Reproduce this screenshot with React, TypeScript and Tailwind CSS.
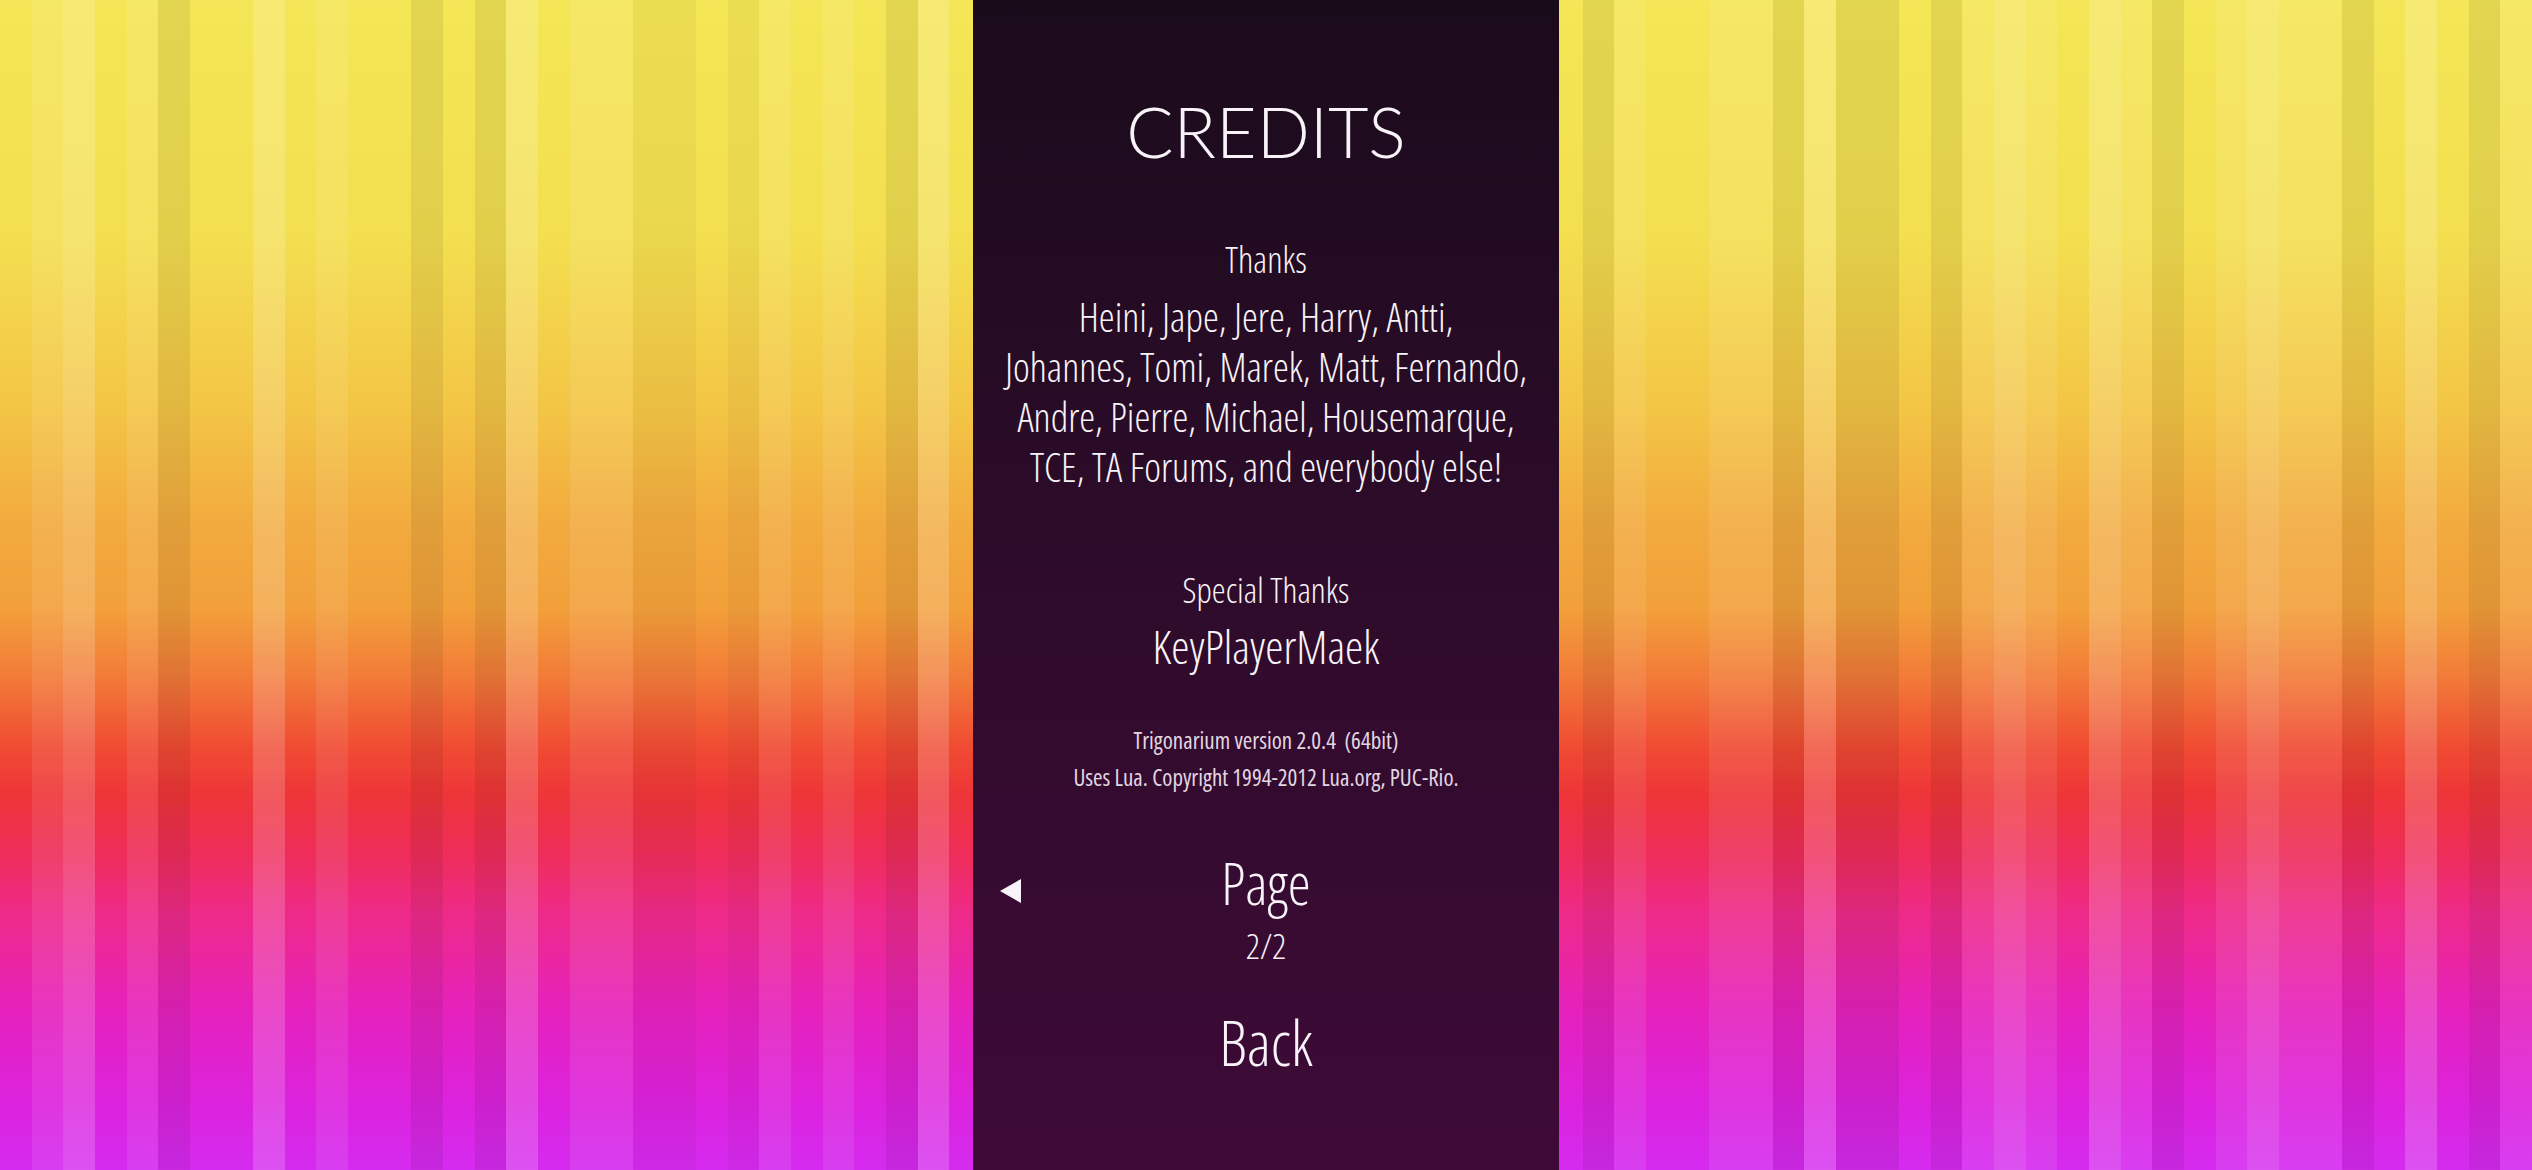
const TONES =
  "mlLmldmmLmlmmdmdLmllxxmxlmlmdLm" +
  "mmmmmmmmmmmmmmmmmm" +
  "mdlmmlldLddmdlLlmLldmlLlldmLmdl";

const toneClass: Record<string, string> = {
  L: "bg-white/[0.18]",
  l: "bg-white/[0.09]",
  m: "",
  x: "bg-black/[0.035]",
  d: "bg-black/[0.07]",
};

function Stripes({ from, to, end }: { from: number; to: number; end?: boolean }) {
  const tones = TONES.slice(from, to).split("");
  return (
    <div
      className={
        "flex flex-1 overflow-hidden bg-[linear-gradient(to_bottom,#f4e656_0%,#f3df50_20%,#f3c545_35%,#f2aa3e_45%,#f2a03a_52%,#f27a38_58%,#f04a33_64%,#ee3538_68%,#ee2d5a_73%,#ee2a88_78%,#e622bb_86%,#dc22dc_94%,#d52bf0_100%)] " +
        (end ? "justify-end" : "justify-start")
      }
    >
      {tones.map((t, i) => (
        <div key={i} className={"h-full w-[31.65px] shrink-0 " + toneClass[t]} />
      ))}
    </div>
  );
}

const names = [
  "Heini, Jape, Jere, Harry, Antti,",
  "Johannes, Tomi, Marek, Matt, Fernando,",
  "Andre, Pierre, Michael, Housemarque,",
  "TCE, TA Forums, and everybody else!",
];

export default function App() {
  return (
    <div className="flex h-[1170px] w-[2532px] overflow-hidden">
      <Stripes from={0} to={31} />

      <main className="flex w-[586px] shrink-0 flex-col items-center bg-gradient-to-b from-[#1a0b1b] via-[#2e0b2b] to-[#3e0a37] font-['Open_Sans',sans-serif] font-light font-stretch-[75%] text-[#f8f3f8]">
        <h1 className="mt-[96px] font-['Lato',sans-serif] text-[70px] font-light font-stretch-normal leading-none">
          CREDITS
        </h1>

        <h2 className="mt-[76px] text-[36px] leading-none">Thanks</h2>
        <div className="mt-[14px] flex flex-col items-center text-[40px] leading-[50px]">
          {names.map((n) => (
            <p key={n}>{n}</p>
          ))}
        </div>

        <h2 className="mt-[80px] text-[35px] leading-none">Special Thanks</h2>
        <p className="mt-[16px] text-[46px] leading-none">KeyPlayerMaek</p>

        <div className="mt-[53px] flex flex-col items-center text-[23px] font-normal leading-[37px] text-[#e2d6e2]">
          <p className="whitespace-pre">Trigonarium version 2.0.4  (64bit)</p>
          <p>Uses Lua. Copyright 1994-2012 Lua.org, PUC-Rio.</p>
        </div>

        <div className="mt-[58px] grid w-full grid-cols-[1fr_auto_1fr]">
          <button className="mt-[25px] self-start justify-self-start pl-[27px]">
            <svg width="21" height="24" viewBox="0 0 21 24">
              <polygon points="0,12 21,0 21,24" fill="#f8f3f8" />
            </svg>
          </button>
          <div className="flex flex-col items-center">
            <p className="text-[58px] leading-none">Page</p>
            <p className="mt-[16px] text-[35px] leading-none">2/2</p>
          </div>
          <div />
        </div>

        <button className="mt-[48px] text-[62px] leading-none">Back</button>
      </main>

      <Stripes from={49} to={80} end />
    </div>
  );
}
